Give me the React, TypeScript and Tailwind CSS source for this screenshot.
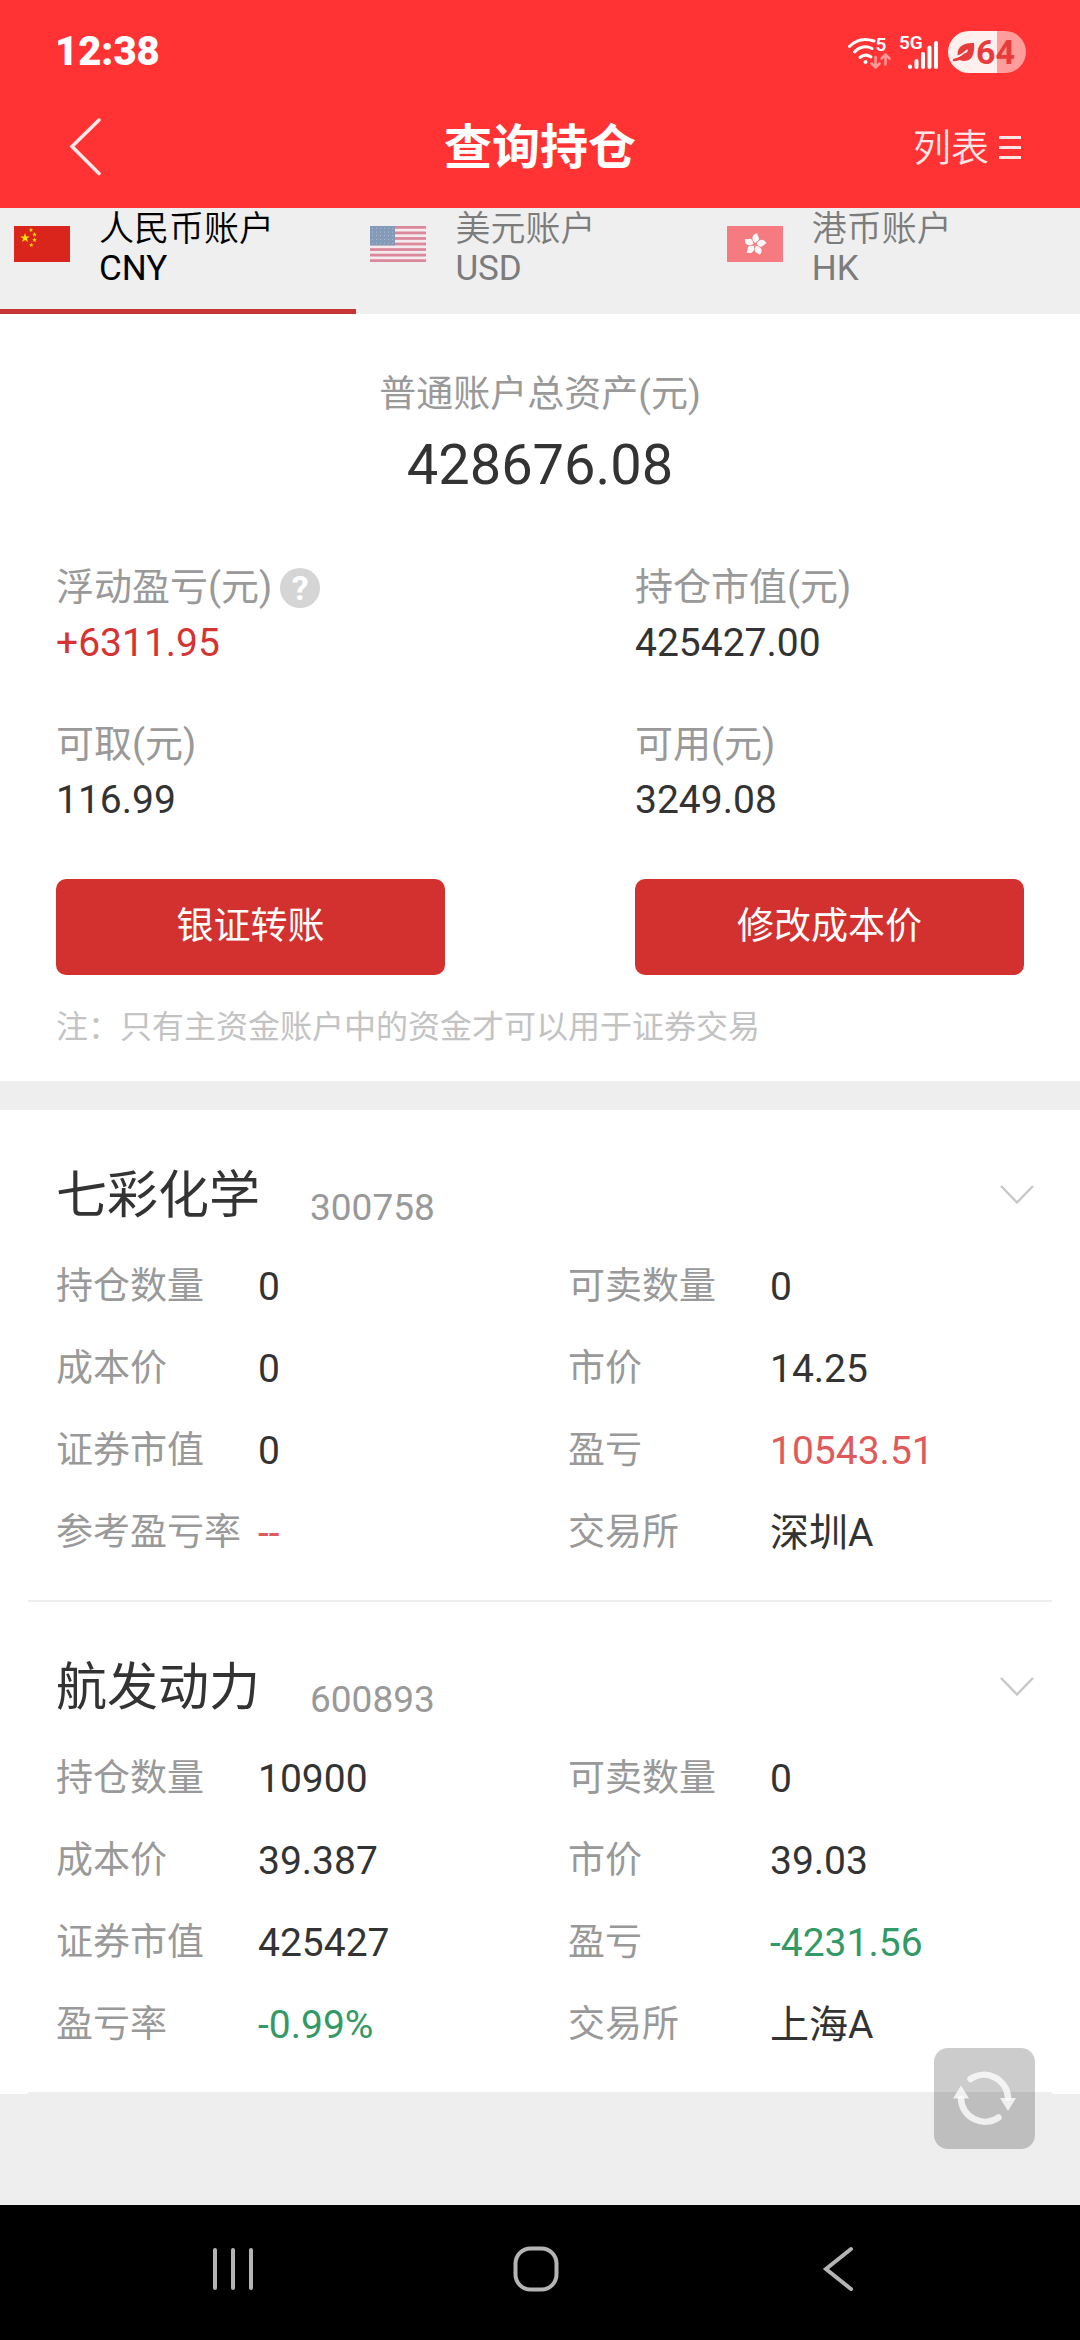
import { useState } from "react";
import clsx from "clsx";

type Tone = "normal" | "up" | "down";

type Field = {
  label: string;
  value: string;
  tone?: Tone;
};

type Holding = {
  name: string;
  code: string;
  fields: Field[];
};

const accounts = [
  { id: "CNY", name: "人民币账户", flag: ChinaFlag },
  { id: "USD", name: "美元账户", flag: UsaFlag },
  { id: "HK", name: "港币账户", flag: HongKongFlag },
];

const summary = [
  { label: "浮动盈亏(元)", value: "+6311.95", className: "text-[#d63332]", help: true },
  { label: "持仓市值(元)", value: "425427.00", className: "text-[#333]" },
  { label: "可取(元)", value: "116.99", className: "text-[#333]" },
  { label: "可用(元)", value: "3249.08", className: "text-[#333]" },
];

const holdings: Holding[] = [
  {
    name: "七彩化学",
    code: "300758",
    fields: [
      { label: "持仓数量", value: "0" },
      { label: "可卖数量", value: "0" },
      { label: "成本价", value: "0" },
      { label: "市价", value: "14.25" },
      { label: "证券市值", value: "0" },
      { label: "盈亏", value: "10543.51", tone: "up" },
      { label: "参考盈亏率", value: "--", tone: "up" },
      { label: "交易所", value: "深圳A" },
    ],
  },
  {
    name: "航发动力",
    code: "600893",
    fields: [
      { label: "持仓数量", value: "10900" },
      { label: "可卖数量", value: "0" },
      { label: "成本价", value: "39.387" },
      { label: "市价", value: "39.03" },
      { label: "证券市值", value: "425427" },
      { label: "盈亏", value: "-4231.56", tone: "down" },
      { label: "盈亏率", value: "-0.99%", tone: "down" },
      { label: "交易所", value: "上海A" },
    ],
  },
];

const tones: Record<Tone, string> = {
  normal: "text-[#333]",
  up: "text-[#e05a5c]",
  down: "text-[#339966]",
};

function starPoints(cx: number, cy: number, r: number) {
  return Array.from({ length: 10 }, (_, i) => {
    const radius = i % 2 === 0 ? r : r * 0.4;
    const angle = (Math.PI / 5) * i - Math.PI / 2;
    return `${cx + radius * Math.cos(angle)},${cy + radius * Math.sin(angle)}`;
  }).join(" ");
}

function ChinaFlag() {
  return (
    <svg viewBox="0 0 56 36" className="w-14 h-9" aria-hidden="true">
      <rect width="56" height="36" fill="#da251c" />
      <g fill="#ffe600">
        <polygon points={starPoints(11, 12, 5)} />
        <polygon points={starPoints(17, 4, 2.4)} />
        <polygon points={starPoints(20.5, 8.5, 2.4)} />
        <polygon points={starPoints(20.5, 14, 2.4)} />
        <polygon points={starPoints(17.3, 19, 2.4)} />
      </g>
    </svg>
  );
}

function UsaFlag() {
  return (
    <svg viewBox="0 0 56 36" className="w-14 h-9" aria-hidden="true">
      <rect width="56" height="36" fill="#fbe6ec" />
      {[0, 1, 2, 3, 4, 5, 6].map((i) => (
        <rect key={i} y={(i * 2 * 36) / 13} width="56" height={36 / 13} fill="#c8244a" />
      ))}
      <rect width="25" height={(36 / 13) * 7} fill="#1a4784" />
      {Array.from({ length: 30 }, (_, i) => (
        <circle key={i} cx={2.5 + (i % 6) * 4} cy={2.2 + Math.floor(i / 6) * 3.7} r="0.5" fill="#8ba6cc" />
      ))}
    </svg>
  );
}

function HongKongFlag() {
  return (
    <svg viewBox="0 0 56 36" className="w-14 h-9" aria-hidden="true">
      <rect width="56" height="36" fill="#fd0a14" />
      <g fill="#fff">
        {[10, 82, 154, 226, 298].map((deg) => (
          <path
            key={deg}
            transform={`translate(28 18.5) rotate(${deg})`}
            d="M0 -1.5 C-5 -4 -5 -10 0.5 -11.5 C0 -9.5 3.5 -8 3 -5.5 C2.7 -3.5 1 -3.5 0 -1.5Z"
          />
        ))}
      </g>
    </svg>
  );
}

function StatusBar() {
  return (
    <div className="flex items-center justify-between h-[88px] pl-[55px] pr-[54px] pt-4">
      <span className="text-[40px] leading-10 font-black">12:38</span>
      <div className="flex items-center">
        <svg viewBox="0 0 92 42" className="w-[92px] h-[42px] mr-2" fill="none" stroke="#fff" strokeLinecap="round" aria-hidden="true">
          <g strokeWidth="3">
            <path d="M1.5 15.5 C8 8.5 17 7 26 10" />
            <path d="M6.500 21 C11.500 15.500 18.500 14.500 24 17.500" />
            <path d="M12 26.500 C15.500 23.500 19.500 23.500 23 26" />
          </g>
          <circle cx="17.5" cy="31" r="2" fill="#fff" stroke="none" />
          <g stroke="#ff9a9a" strokeWidth="2.5" strokeLinejoin="round">
            <path d="M27.500 26 V36.500 M23.500 32.500 L27.500 36.500 L31.500 32.500" />
            <path d="M37.500 33.500 V23.500 M33.500 27.500 L37.500 23.500 L41.500 27.500" />
          </g>
          <g fill="#fff" stroke="none" fontFamily="Roboto, sans-serif" fontWeight="600">
            <text x="27.500" y="20" fontSize="19">5</text>
            <text x="51" y="18" fontSize="19">5G</text>
          </g>
          <g strokeWidth="4">
            <path d="M62 35.500 V36" />
            <path d="M68.500 30 V36" />
            <path d="M75 23 V36" />
            <path d="M81.500 16.500 V36" />
            <path d="M88 12 V36" />
          </g>
        </svg>
        <div className="flex items-center h-[42px] w-[78px] rounded-full pl-1 bg-[linear-gradient(to_right,#fff0f0_49px,#ff9c9c_49px)] text-[#e83c3c]">
          <svg viewBox="0 0 24 22" className="w-6 h-[22px]" aria-hidden="true">
            <path d="M6 16 C4 8 9 1.500 22 2 C22.500 9 22 20 12 20 C9 20 7 19 6 16Z" fill="currentColor" />
            <path d="M15 9.500 C12 13 8 15.500 2 16.500" stroke="#fff0f0" strokeWidth="2" strokeLinecap="round" fill="none" />
            <path d="M13 13.500 C10 16.500 6 18.500 2 19" stroke="currentColor" strokeWidth="2.5" strokeLinecap="round" fill="none" />
          </svg>
          <span className="text-[34px] leading-10 font-bold">64</span>
        </div>
      </div>
    </div>
  );
}

function TitleBar() {
  return (
    <div className="grid grid-cols-[1fr_auto_1fr] items-center h-[120px] px-[59px]">
      <button type="button" aria-label="返回" className="justify-self-start pl-2.5">
        <svg viewBox="0 0 34 60" className="w-[34px] h-[60px]" fill="none" stroke="#ffe9e9" strokeWidth="3.5" strokeLinecap="round" aria-hidden="true">
          <path d="M30 2 L3 28.500 L30 55.500" />
        </svg>
      </button>
      <h1 className="text-5xl font-bold">查询持仓</h1>
      <button type="button" className="justify-self-end flex items-center gap-2.5 text-[38px] leading-10 font-[350] text-[#ffe5e5]">
        列表
        <svg viewBox="0 0 22 26" className="w-[22px] h-[26px]" stroke="currentColor" strokeWidth="3" aria-hidden="true">
          <path d="M0 2.500 H22 M0 12.500 H22 M0 22.500 H22" />
        </svg>
      </button>
    </div>
  );
}

function HoldingCard({ name, code, fields }: Holding) {
  return (
    <article className="bg-white">
      <div className="flex items-center justify-between h-[136px] pt-9 pl-14 pr-[45px]">
        <div className="flex items-end gap-[50px]">
          <h2 className="text-[51px] leading-[64px] text-[#333]">{name}</h2>
          <span className="text-[37px] leading-10 text-[#999]">{code}</span>
        </div>
        <button type="button" aria-label="展开">
          <svg viewBox="0 0 36 22" className="w-9 h-[22px]" fill="none" stroke="#c8c8c8" strokeWidth="2.5" aria-hidden="true">
            <path d="M2 1 L18 17.500 L34 1" />
          </svg>
        </button>
      </div>
      <dl className="grid grid-cols-2 pl-14">
        {fields.map((field) => (
          <div key={field.label} className="flex items-center h-[82px]">
            <dt className="w-[202px] text-[37px] whitespace-nowrap text-[#999]">{field.label}</dt>
            <dd className={clsx("text-[39px]", tones[field.tone ?? "normal"])}>{field.value}</dd>
          </div>
        ))}
      </dl>
      <div className="mx-7 h-7 border-b-2 border-[#eee]" />
    </article>
  );
}

export default function App() {
  const [account, setAccount] = useState("CNY");

  return (
    <div className="flex flex-col min-h-screen bg-[#eee] font-['Roboto','Noto_Sans_CJK_SC',sans-serif]">
      <header className="bg-[#ff3333] text-white">
        <StatusBar />
        <TitleBar />
      </header>

      <div role="tablist" className="flex h-[106px] bg-[#efefef]">
        {accounts.map(({ id, name, flag: Flag }) => (
          <button
            key={id}
            type="button"
            role="tab"
            aria-selected={account === id}
            onClick={() => setAccount(id)}
            className={clsx(
              "flex w-[33%] gap-[29px] pl-3.5 text-left leading-[39px] border-b-[5px]",
              account === id ? "border-[#c73535] text-black" : "border-transparent text-[#7c7c7c]"
            )}
          >
            <span className={clsx("mt-[18px] shrink-0", account !== id && "opacity-50")}>
              <Flag />
            </span>
            <span className="mt-0.5 text-[35px]">
              <span className="block font-[350]">{name}</span>
              <span className="block">{id}</span>
            </span>
          </button>
        ))}
      </div>

      <main className="flex-1">
        <section className="bg-white px-14 pt-14 pb-[30px] mb-[29px]">
          <div className="text-center">
            <p className="text-[37px] leading-[49px] text-[#999]">普通账户总资产(元)</p>
            <p className="text-[56px] leading-[92px] text-[#333]">428676.08</p>
          </div>
          <div className="grid grid-cols-2 gap-x-[190px] gap-y-[46px] mt-[49px]">
            {summary.map((item) => (
              <div key={item.label}>
                <div className="flex items-center gap-2 text-[38px] leading-[55px] text-[#999] whitespace-nowrap">
                  {item.label}
                  {item.help && (
                    <button
                      type="button"
                      aria-label="说明"
                      className="size-10 rounded-full bg-[#d5d5d5] text-white text-[34px] leading-10 font-bold"
                    >
                      ?
                    </button>
                  )}
                </div>
                <div className={clsx("text-[39px] leading-[56px]", item.className)}>{item.value}</div>
              </div>
            ))}
          </div>
          <div className="grid grid-cols-2 gap-x-[190px] mt-[51px]">
            <button type="button" className="h-24 rounded-[10px] bg-[#d33130] text-[37px] text-white">
              银证转账
            </button>
            <button type="button" className="h-24 rounded-[10px] bg-[#d33130] text-[37px] text-white">
              修改成本价
            </button>
          </div>
          <p className="mt-7 text-[32px] leading-[48px] text-[#c3c3c3]">
            注：只有主资金账户中的资金才可以用于证券交易
          </p>
        </section>

        {holdings.map((holding) => (
          <HoldingCard key={holding.code} {...holding} />
        ))}
      </main>

      <button
        type="button"
        aria-label="刷新"
        className="fixed right-[45px] bottom-[191px] size-[101px] rounded-[14px] bg-black/20"
      >
        <svg viewBox="0 0 101 101" className="size-full" aria-hidden="true">
          <g fill="none" stroke="#fff" strokeOpacity="0.75" strokeWidth="6.5" strokeLinecap="round">
            <path d="M36.500 31 A24 24 0 0 1 74 49.500" />
            <path d="M64.500 69.500 A24 24 0 0 1 27 51" />
          </g>
          <g fill="#fff" fillOpacity="0.75">
            <path d="M66 50 H82 L74 63Z" />
            <path d="M19 50.500 H35 L27 37.500Z" />
          </g>
        </svg>
      </button>

      <nav className="flex items-center justify-between h-[135px] pl-[210px] pr-[219px] pb-2 bg-black">
        <button type="button" aria-label="最近任务">
          <svg viewBox="0 0 46 46" className="size-[46px]" stroke="#b4b4b4" strokeWidth="4" strokeLinecap="round" aria-hidden="true">
            <path d="M5 4 V42 M23 4 V42 M41 4 V42" />
          </svg>
        </button>
        <button type="button" aria-label="主屏幕">
          <svg viewBox="0 0 46 46" className="size-[46px]" fill="none" stroke="#b4b4b4" strokeWidth="4" aria-hidden="true">
            <rect x="2.500" y="2.500" width="41" height="41" rx="15" />
          </svg>
        </button>
        <button type="button" aria-label="返回桌面">
          <svg viewBox="0 0 46 46" className="size-[46px]" fill="none" stroke="#b4b4b4" strokeWidth="4" strokeLinecap="round" aria-hidden="true">
            <path d="M36 3 L11 23 L36 43" />
          </svg>
        </button>
      </nav>
    </div>
  );
}
